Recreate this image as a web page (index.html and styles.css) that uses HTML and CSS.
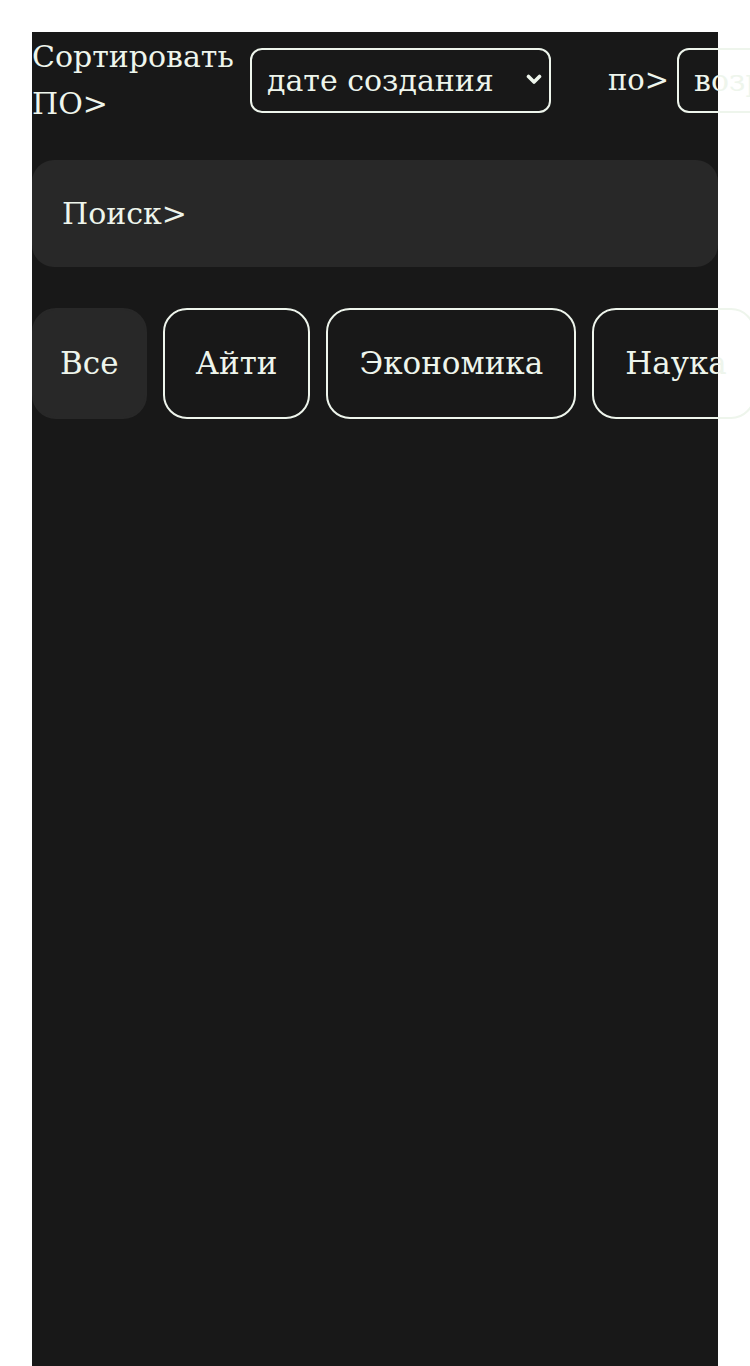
FILE: index.html
```html
<!DOCTYPE html>
<html lang="ru">
<head>
<meta charset="utf-8">
<title>Сортировка</title>
<link rel="stylesheet" href="styles.css">
</head>
<body>
<main class="page">
  <div class="sort-row">
    <div class="sort-group">
      <label class="sort-label" for="sort-field">Сортировать ПО&gt;</label>
      <div class="select-wrap select-wide">
        <select id="sort-field" class="select">
          <option>дате создания</option>
        </select>
        <svg class="chevron" viewBox="0 0 16 11" width="16" height="11" aria-hidden="true"><path d="M2.5 2.5l5.5 5.5 5.5-5.5" fill="none" stroke="currentColor" stroke-width="3.6" stroke-linecap="round" stroke-linejoin="round"/></svg>
      </div>
    </div>
    <div class="sort-group group-order">
      <label class="order-label" for="sort-order">по&gt;</label>
      <div class="select-wrap">
        <select id="sort-order" class="select">
          <option>возрастанию</option>
        </select>
        <svg class="chevron" viewBox="0 0 16 11" width="16" height="11" aria-hidden="true"><path d="M2.5 2.5l5.5 5.5 5.5-5.5" fill="none" stroke="currentColor" stroke-width="3.6" stroke-linecap="round" stroke-linejoin="round"/></svg>
      </div>
    </div>
  </div>

  <div class="search">Поиск&gt;</div>

  <div class="tags">
    <button class="tag tag-active">Все</button>
    <button class="tag">Айти</button>
    <button class="tag">Экономика</button>
    <button class="tag tag-last">Наука</button>
  </div>
</main>
</body>
</html>
```

FILE: styles.css
```css
html, body {
  margin: 0;
  padding: 0;
  background: #ffffff;
}

body {
  padding: 32px 32px 0 32px;
  font-family: "DejaVu Serif", "Liberation Serif", serif;
  color: #eef5ec;
}

.page {
  background: #181818;
  min-height: 1400px;
  width: 686px;
}

.sort-row {
  display: flex;
  align-items: center;
  white-space: nowrap;
}

.sort-group {
  display: flex;
  align-items: center;
  gap: 10px;
  flex-shrink: 0;
}

.group-order {
  margin-left: 57px;
  gap: 8px;
}

.sort-label {
  font-size: 30px;
  line-height: 47px;
  width: 208px;
  white-space: normal;
  padding-top: 1px;
  padding-bottom: 1px;
}

.order-label {
  font-size: 29px;
  line-height: 47px;
}

.select-wrap {
  position: relative;
  flex-shrink: 0;
}

.select {
  appearance: none;
  -webkit-appearance: none;
  background: transparent;
  color: #eef5ec;
  border: 2px solid #eef5ec;
  border-radius: 12px;
  height: 65px;
  box-sizing: border-box;
  padding: 0 15px;
  font-family: "DejaVu Serif", serif;
  font-size: 30px;
  outline: none;
}

.select-wide .select {
  width: 301px;
}

.chevron {
  position: absolute;
  right: 9px;
  top: 26px;
  color: #eef5ec;
}

.search {
  margin-top: 32px;
  background: #282828;
  border-radius: 22px;
  padding: 30px;
  font-size: 30px;
  line-height: 47px;
}

.tags {
  display: flex;
  gap: 16px;
  margin-top: 41px;
}

.tag {
  flex-shrink: 0;
  background: transparent;
  color: #eef5ec;
  border: 2px solid #eef5ec;
  border-radius: 24px;
  padding: 30px 31px;
  font-family: "DejaVu Serif", serif;
  font-size: 31px;
  line-height: 47px;
}

.tag-active {
  background: #282828;
  border-color: #282828;
  padding: 30px 26px;
}

.tag-last {
  padding-right: 26px;
}
```
